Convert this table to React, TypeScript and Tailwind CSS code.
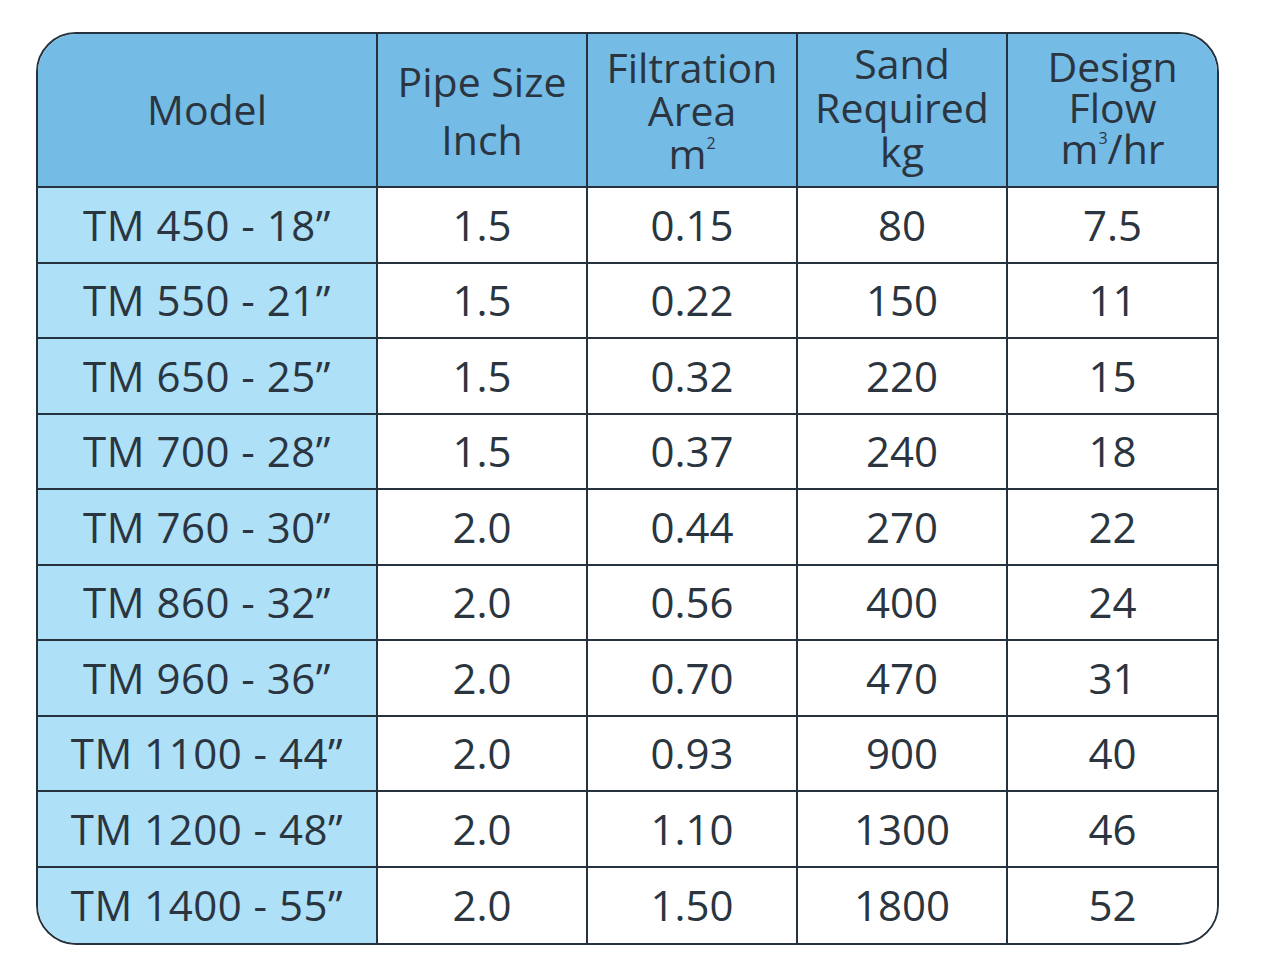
const rows = [
  ["TM 450 - 18”", "1.5", "0.15", "80", "7.5"],
  ["TM 550 - 21”", "1.5", "0.22", "150", "11"],
  ["TM 650 - 25”", "1.5", "0.32", "220", "15"],
  ["TM 700 - 28”", "1.5", "0.37", "240", "18"],
  ["TM 760 - 30”", "2.0", "0.44", "270", "22"],
  ["TM 860 - 32”", "2.0", "0.56", "400", "24"],
  ["TM 960 - 36”", "2.0", "0.70", "470", "31"],
  ["TM 1100 - 44”", "2.0", "0.93", "900", "40"],
  ["TM 1200 - 48”", "2.0", "1.10", "1300", "46"],
  ["TM 1400 - 55”", "2.0", "1.50", "1800", "52"],
];

export default function App() {
  return (
    <div
      className="min-h-[973px] w-[1261px] bg-white pl-[36px] pt-[32px] text-[#2b3540]"
      style={{ fontFamily: '"Open Sans", "Noto Sans", sans-serif' }}
    >
      <div className="w-[1183px] overflow-hidden rounded-[40px] border-2 border-[#26323e]">
        {/* Header */}
        <div className="grid h-[154px] grid-cols-[340px_210px_210px_210px_209px] border-b-2 border-[#26323e] bg-[#74bbe6] text-center text-[41px]">
          <div className="flex items-center justify-center border-r-2 border-[#26323e] pb-[2px] leading-none">
            Model
          </div>
          <div className="flex flex-col items-center justify-center border-r-2 border-[#26323e] leading-[58px]">
            <span>Pipe Size</span>
            <span>Inch</span>
          </div>
          <div className="flex flex-col items-center justify-center border-r-2 border-[#26323e] pt-[10px] leading-[43px]">
            <span>Filtration</span>
            <span>Area</span>
            <span>
              m<span className="relative -top-[20px] text-[16px]">2</span>
            </span>
          </div>
          <div className="flex flex-col items-center justify-center border-r-2 border-[#26323e] pb-[6px] leading-[44px]">
            <span>Sand</span>
            <span>Required</span>
            <span>kg</span>
          </div>
          <div className="flex flex-col items-center justify-center pt-[4px] leading-[41px]">
            <span>Design</span>
            <span>Flow</span>
            <span>
              m<span className="relative -top-[20px] text-[16px]">3</span>/hr
            </span>
          </div>
        </div>

        {/* Body */}
        {rows.map((row, i) => (
          <div
            key={row[0]}
            className={`grid h-[75.5px] grid-cols-[340px_210px_210px_210px_209px] text-center text-[42px] leading-none ${
              i < rows.length - 1 ? "border-b-2 border-[#26323e]" : ""
            }`}
          >
            {row.map((cell, j) => (
              <div
                key={j}
                className={`flex items-center justify-center ${j === 0 ? "bg-[#aee0f8] tracking-[0.5px]" : "bg-white"} ${
                  j < 4 ? "border-r-2 border-[#26323e]" : ""
                }`}
              >
                {cell}
              </div>
            ))}
          </div>
        ))}
      </div>
    </div>
  );
}
